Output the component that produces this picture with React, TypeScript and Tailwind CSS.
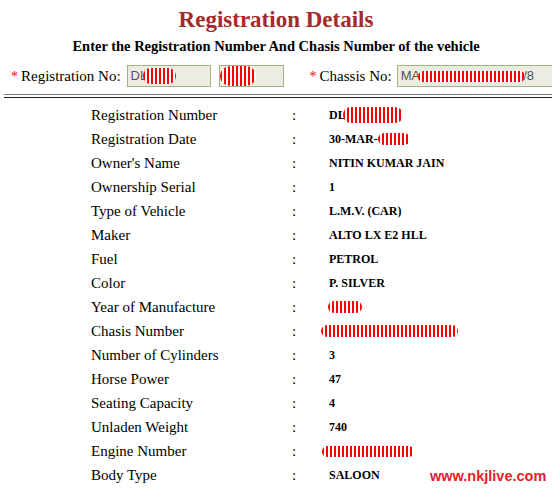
import React from "react";

const rows: { label: string; value: string; scribble?: { w: number; h: number; ml?: number } }[] = [
  { label: "Registration Number", value: "DL", scribble: { w: 60, h: 16, ml: -3 } },
  { label: "Registration Date", value: "30-MAR-", scribble: { w: 32, h: 12, ml: 0 } },
  { label: "Owner's Name", value: "NITIN KUMAR JAIN" },
  { label: "Ownership Serial", value: "1" },
  { label: "Type of Vehicle", value: "L.M.V. (CAR)" },
  { label: "Maker", value: "ALTO LX E2 HLL" },
  { label: "Fuel", value: "PETROL" },
  { label: "Color", value: "P. SILVER" },
  { label: "Year of Manufacture", value: "", scribble: { w: 34, h: 12, ml: -1 } },
  { label: "Chasis Number", value: "", scribble: { w: 137, h: 12, ml: -8 } },
  { label: "Number of Cylinders", value: "3" },
  { label: "Horse Power", value: "47" },
  { label: "Seating Capacity", value: "4" },
  { label: "Unladen Weight", value: "740" },
  { label: "Engine Number", value: "", scribble: { w: 92, h: 11, ml: -7 } },
  { label: "Body Type", value: "SALOON" },
];

function Scribble({ w, h, ml = 0 }: { w: number; h: number; ml?: number }) {
  return (
    <span
      className="inline-block align-middle shrink-0 rounded-full bg-[repeating-linear-gradient(90deg,#ff0000_0_2.5px,#ffffff_2.5px_4px)]"
      style={{ width: w, height: h, marginLeft: ml }}
    />
  );
}

export default function App() {
  return (
    <div className="w-[552px] h-[491px] bg-white overflow-hidden relative font-['Liberation_Serif',serif] text-black">
      <div className="pt-[6px] text-center text-[23px] leading-[28px] font-bold text-[#a52a2a]">
        Registration Details
      </div>
      <div className="mt-[4px] text-center text-[14.5px] leading-[17px] font-bold">
        Enter the Registration Number And Chasis Number of the vehicle
      </div>

      <div className="mt-[10px] flex items-center h-[22px] text-[15px] whitespace-nowrap">
        <span className="ml-[11px] text-[#ff0000] text-[14px] mr-[3px]">*</span>
        <span>Registration No:</span>
        <div className="ml-[6px] w-[84px] h-[22px] shrink-0 border border-[#9cb87c] bg-[#ecebe4] flex items-center pl-[3px] font-['Liberation_Sans',sans-serif] text-[13px] text-[#555]">
          DL<Scribble w={33} h={16} ml={-4} />
        </div>
        <div className="ml-[8px] w-[65px] h-[22px] shrink-0 border border-[#9cb87c] bg-[#ecebe4] flex items-center">
          <Scribble w={36} h={20} ml={0} />
        </div>
        <span className="ml-[26px] text-[#ff0000] text-[14px] mr-[3px]">*</span>
        <span>Chassis No:</span>
        <div className="ml-[5px] w-[160px] h-[22px] shrink-0 border border-[#9cb87c] bg-[#ecebe4] flex items-center pl-[3px] font-['Liberation_Sans',sans-serif] text-[13px] text-[#555]">
          MA<Scribble w={107} h={11} ml={-2} />
          <span className="-ml-[2px]">/8</span>
        </div>
      </div>

      <div className="mt-[7px] ml-[4px] h-px bg-[#777]" />
      <div className="mt-[2px] ml-[4px] h-px bg-[#222]" />

      <div className="mt-[5px]">
        {rows.map((r) => (
          <div key={r.label} className="flex items-center h-[24px] whitespace-nowrap">
            <div className="w-[292px] shrink-0 pl-[91px] text-[15px]">{r.label}</div>
            <div className="w-[37px] shrink-0 text-[15px]">:</div>
            <div className="text-[12px] font-bold flex items-center">
              {r.value}
              {r.scribble && <Scribble {...r.scribble} />}
            </div>
          </div>
        ))}
      </div>

      <div className="absolute left-[430px] top-[467px] text-[14.5px] leading-[18px] font-bold text-[#e8202a] font-['Liberation_Sans',sans-serif]">
        www.nkjlive.com
      </div>
    </div>
  );
}
